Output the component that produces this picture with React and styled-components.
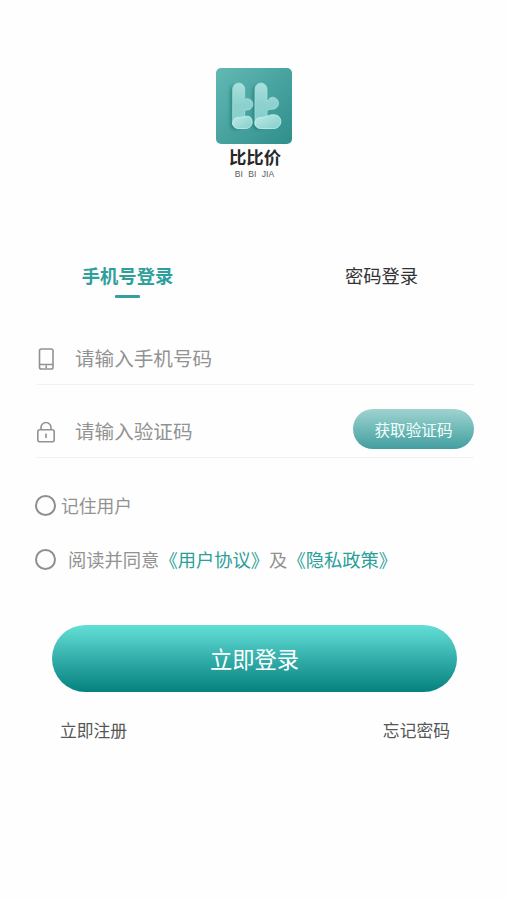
import React from 'react';
import styled, { createGlobalStyle } from 'styled-components';

const GlobalStyle = createGlobalStyle`
  * { box-sizing: border-box; }
  body {
    margin: 0;
    background: #fefefe;
    font-family: "Noto Sans CJK SC", "Noto Sans", sans-serif;
  }
  button, input { font-family: inherit; }
`;

const Page = styled.main`
  width: 507px;
  height: 900px;
  padding-top: 68px;
  overflow: hidden;
  display: flex;
  flex-direction: column;
`;

const Brand = styled.header`
  height: 188px;
  padding-left: 1px;
  display: flex;
  flex-direction: column;
  align-items: center;
`;

const Logo = styled.svg`
  width: 76px;
  height: 76px;
  flex: none;
`;

const BrandName = styled.h1`
  margin: 2px 0 0 2px;
  font-size: 17.4px;
  line-height: 22px;
  font-weight: 700;
  color: #262829;
`;

const BrandLatin = styled.span`
  margin: 1px 0 0 1px;
  font-family: "Liberation Sans", Arial, sans-serif;
  font-size: 8.6px;
  line-height: 10px;
  word-spacing: 3px;
  color: #5c5c5c;
`;

const Tabs = styled.nav`
  height: 66px;
  padding-left: 1px;
  display: grid;
  grid-template-columns: 1fr 1fr;
`;

const Tab = styled.button`
  padding: 5px 0 0;
  border: 0;
  background: none;
  display: flex;
  flex-direction: column;
  align-items: center;
  font-size: 18.3px;
  line-height: 28px;
  font-weight: ${({ $active }) => ($active ? 700 : 400)};
  color: ${({ $active }) => ($active ? '#2f9f9b' : '#333')};

  &::after {
    content: '';
    width: 25px;
    height: 3px;
    margin-top: 6px;
    border-radius: 1px;
    background: ${({ $active }) => ($active ? '#359f9f' : 'transparent')};
  }
`;

const TabLabel = styled.span`
  padding-left: ${({ $shift = 0 }) => $shift}px;
`;

const Field = styled.label`
  height: ${({ $height }) => $height}px;
  margin: 0 33px 0 36px;
  padding-bottom: ${({ $bottom }) => $bottom}px;
  border-bottom: 1px solid #f2f2f2;
  display: flex;
  align-items: flex-end;
`;

const FieldIcon = styled.svg`
  width: 20px;
  height: 24px;
  margin-bottom: ${({ $bottom }) => $bottom}px;
  flex: none;
  fill: none;
  stroke: #929292;
  stroke-width: 1.6;
`;

const Input = styled.input`
  flex: 1;
  min-width: 0;
  height: 28px;
  margin: 0 0 0 19px;
  padding: 0;
  border: 0;
  outline: 0;
  background: none;
  font-size: 19.6px;
  line-height: 28px;
  color: #555;

  &::placeholder { color: #929292; opacity: 1; }
`;

const CodeButton = styled.button`
  width: 121px;
  height: 40px;
  margin-bottom: -4px;
  padding: 0;
  border: 0;
  border-radius: 20px;
  background: linear-gradient(#9fd3d0, #74bcba 45%, #439e9f);
  font-size: 15.6px;
  line-height: 40px;
  color: #f4ffff;
`;

const Options = styled.section`
  padding: 33px 0 0 35px;
  display: flex;
  flex-direction: column;
  gap: 26px;
`;

const Option = styled.div`
  height: 28px;
  display: flex;
  align-items: center;
  gap: ${({ $gap }) => $gap}px;
  font-size: ${({ $size }) => $size}px;
  line-height: 28px;
  white-space: nowrap;
  color: #929292;
`;

const OptionText = styled.span`
  margin-top: -1px;
`;

const Radio = styled.input`
  appearance: none;
  width: 21px;
  height: 21px;
  margin: 0;
  border: 2px solid #8f8f8f;
  border-radius: 50%;
  flex: none;
`;

const Policy = styled.a`
  color: #2a9f98;
`;

const LoginButton = styled.button`
  height: 67px;
  margin: 52px 50px 0 52px;
  padding: 0;
  border: 0;
  border-radius: 34px;
  flex: none;
  background: linear-gradient(#61ded6, #55d1ca 15%, #2fa9a5 55%, #05827f);
  font-size: 22.3px;
  line-height: 67px;
  color: #fff;
`;

const FooterLinks = styled.footer`
  margin: 25px 57px 0 60px;
  display: flex;
  justify-content: space-between;
`;

const FooterLink = styled.a`
  font-size: 16.8px;
  line-height: 26px;
  color: #565656;
`;

function BrandLogo() {
  return (
    <Logo viewBox="0 0 76 76" aria-hidden="true">
      <defs>
        <linearGradient id="tile" x1="0" y1="0" x2="1" y2="1">
          <stop offset="0" stopColor="#62b9b4" />
          <stop offset=".5" stopColor="#48a39f" />
          <stop offset="1" stopColor="#2f8f8b" />
        </linearGradient>
        <linearGradient id="stroke" x1="0" y1="0" x2="0" y2="1">
          <stop offset="0" stopColor="#a9e0dd" />
          <stop offset=".5" stopColor="#8dd1ce" />
          <stop offset="1" stopColor="#85cecb" />
        </linearGradient>
        <linearGradient id="foot" x1="0" y1="0" x2="1" y2="1">
          <stop offset="0" stopColor="#bdebe8" />
          <stop offset="1" stopColor="#84ceca" />
        </linearGradient>
        <filter id="soft" x="-30%" y="-30%" width="160%" height="160%">
          <feGaussianBlur stdDeviation="1.5" />
        </filter>
      </defs>
      <rect width="76" height="76" rx="5" fill="url(#tile)" />
      <g fill="#1f7772" opacity=".6" filter="url(#soft)">
        <rect x="14" y="17" width="11" height="45" rx="5.500" />
        <rect x="36.500" y="17" width="11" height="45" rx="5.500" />
      </g>
      <g fill="url(#stroke)" stroke="#a8dfdc" strokeWidth=".8">
        <path d="M16.700 21a6 6 0 0 1 12 0v10.500c.8-.6 1.500-.8 2.500-.8a5.600 5.600 0 0 1 0 11.200c-1 0-1.800.2-2.500.8V57H16.700z" />
        <path d="M39 21a6 6 0 0 1 12 0v12c1.500 0 2-3.800 5.500-3.800a6 6 0 0 1 0 12c-2.500 0-4 0-5.500 2V57H39z" />
      </g>
      <g fill="url(#foot)" stroke="#c9f1ef" strokeWidth=".8">
        <path d="M22 49.500c4 .3 6-1.300 9.500-1.300 6.500 0 6.500 12.300-2 12.300H22c-7 0-7-11 0-11z" />
        <path d="M44.500 49.500c5 .3 7.500-2.800 13-2.800 10 0 9.500 13.800 0 13.800h-13c-7.500 0-7.500-11 0-11z" />
      </g>
    </Logo>
  );
}

export default function App() {
  return (
    <>
      <GlobalStyle />
      <Page>
        <Brand>
          <BrandLogo />
          <BrandName>比比价</BrandName>
          <BrandLatin>BI BI JIA</BrandLatin>
        </Brand>
        <Tabs>
          <Tab $active><TabLabel>手机号登录</TabLabel></Tab>
          <Tab><TabLabel $shift={2}>密码登录</TabLabel></Tab>
        </Tabs>
        <Field $height={63} $bottom={12}>
          <FieldIcon $bottom={1} viewBox="0 0 20 24">
            <rect x="3.500" y="2" width="13.500" height="20" rx="1.800" />
            <path d="M3.500 17.500h13.500M10.200 18.500v2.500" />
          </FieldIcon>
          <Input placeholder="请输入手机号码" />
        </Field>
        <Field $height={73} $bottom={12}>
          <FieldIcon $bottom={1} viewBox="0 0 20 24">
            <rect x="1.800" y="9.800" width="16.400" height="12" rx="2" />
            <path d="M5 9.500V7.500a5 5 0 0 1 10 0v2M10 13.500v4.500" />
          </FieldIcon>
          <Input placeholder="请输入验证码" />
          <CodeButton>获取验证码</CodeButton>
        </Field>
        <Options>
          <Option $size={17.8} $gap={5}>
            <Radio type="radio" aria-label="记住用户" />
            <OptionText>记住用户</OptionText>
          </Option>
          <Option $size={18.3} $gap={12}>
            <Radio type="radio" aria-label="阅读并同意" />
            <OptionText>
              阅读并同意<Policy>《用户协议》</Policy>及<Policy>《隐私政策》</Policy>
            </OptionText>
          </Option>
        </Options>
        <LoginButton>立即登录</LoginButton>
        <FooterLinks>
          <FooterLink>立即注册</FooterLink>
          <FooterLink>忘记密码</FooterLink>
        </FooterLinks>
      </Page>
    </>
  );
}
